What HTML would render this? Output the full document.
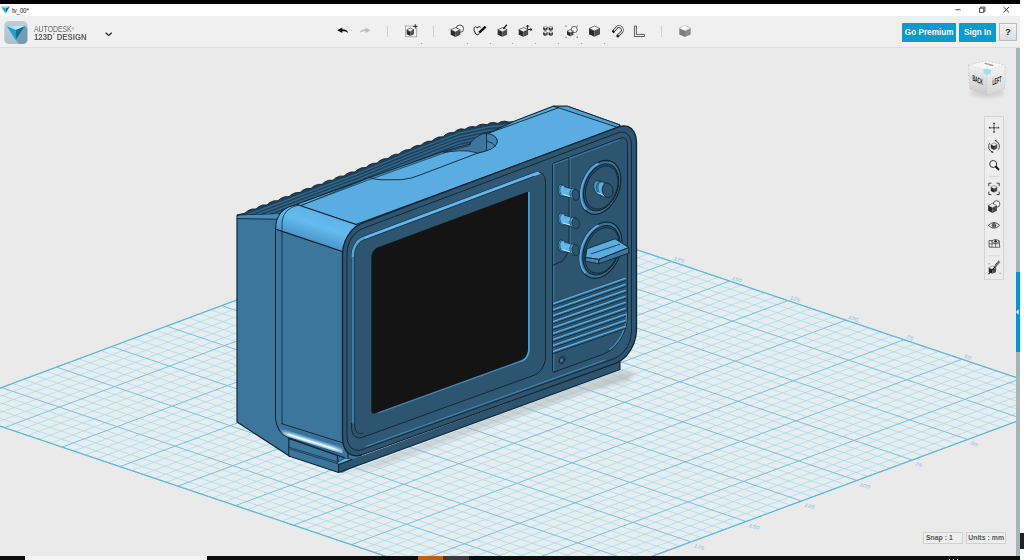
<!DOCTYPE html>
<html><head><meta charset="utf-8"><title>tv_00*</title>
<style>
html,body{margin:0;padding:0;}
body{width:1024px;height:560px;overflow:hidden;background:#fff;font-family:"Liberation Sans",sans-serif;}
#app{position:relative;width:1024px;height:560px;overflow:hidden;background:#eaeaea;}
#scene{position:absolute;left:0;top:0;}
.abs{position:absolute;}
#blacktop{left:0;top:0;width:1020px;height:4px;background:#000;}
#titlebar{left:0;top:4px;width:1024px;height:12px;background:#fff;}
#titletext{left:12px;top:6.7px;font-size:6.3px;line-height:8px;color:#222;letter-spacing:-0.2px;}
#toolbar{left:0;top:16px;width:1020px;height:31.4px;background:#f0f0f0;border-bottom:1px solid #dedede;}
#rightstrip{left:1020px;top:0;width:4px;height:560px;background:#fff;}
#rightblock{left:1020px;top:532.5px;width:4px;height:16.5px;background:#222;}
#vbar{left:1016px;top:48px;width:4px;height:507.5px;background:#a9b4b4;}
#vbarblue{left:1015.5px;top:272px;width:4.5px;height:80px;background:#0a94cf;}
#bottombar{left:0;top:555.5px;width:1020px;height:4.5px;background:#0d0d0d;}
#bb-white{left:25px;top:555.5px;width:182px;height:4.5px;background:#f4f4f4;}
#bb-orange{left:418px;top:555.5px;width:25px;height:4.5px;background:#b5601c;}
#bb-gray{left:443px;top:555.5px;width:26px;height:4.5px;background:#3a3a3a;}
.brand{left:34px;color:#555;white-space:nowrap;}
#brand1{top:25.6px;font-size:8.2px;line-height:8px;color:#6a6a6a;transform-origin:0 0;transform:scaleX(0.84);}
#brand2{top:32.8px;font-size:8.3px;line-height:8px;font-weight:bold;color:#5c5c5c;transform-origin:0 0;transform:scaleX(0.94);}
.btn{top:23px;height:19px;background:#0b9ad0;color:#fff;font-weight:bold;font-size:8.2px;line-height:19px;text-align:center;border-radius:1px;white-space:nowrap;}
#help{left:999.2px;top:23px;width:17.6px;height:18.2px;font-weight:bold;background:linear-gradient(#f6f6f6,#dcdcdc);border:0.5px solid #bbb;box-sizing:border-box;color:#222;font-size:9px;line-height:17px;text-align:center;}
.sep{top:26px;width:1px;height:11px;background:#cfcfcf;}
.dot{top:43px;width:1.2px;height:1.2px;background:#a8a8a8;}
.ico{overflow:visible;}
.status{top:532px;height:11.5px;box-sizing:border-box;border:1px solid #d0d0d0;background:#eeeeee;color:#555;font-weight:bold;font-size:6.85px;line-height:9.6px;white-space:nowrap;padding-left:1.6px;letter-spacing:0.05px;}
#navpanel{left:984px;top:116px;width:19.5px;height:163.5px;box-sizing:border-box;border:1px solid #d4d4d4;background:#ededed;}
.gl{font-size:5px;fill:#7cc3e0;font-family:"Liberation Sans",sans-serif;font-style:italic;}

</style></head><body>
<div id="app">
<svg id="scene" width="1024" height="560" viewBox="0 0 1024 560">
<g id="grid">
<polygon points="1078.5,398.4 497.7,202.9 -53.5,408.1 525.2,603.3" fill="#e7eef1"/>
<path d="M1066.8,394.5 L513.6,599.4 M1067.4,402.5 L486.6,207.0 M1055.2,390.5 L502.0,595.5 M1056.3,406.6 L475.6,211.1 M1043.6,386.6 L490.4,591.6 M1045.2,410.7 L464.5,215.2 M1032.0,382.7 L478.8,587.7 M1034.1,414.8 L453.5,219.3 M1008.7,374.9 L455.7,579.8 M1011.9,423.0 L431.4,227.6 M997.1,371.0 L444.1,575.9 M1000.8,427.1 L420.3,231.7 M985.5,367.1 L432.5,572.0 M989.8,431.2 L409.3,235.8 M973.8,363.2 L420.9,568.1 M978.7,435.3 L398.3,239.9 M950.6,355.3 L397.7,560.3 M956.5,443.6 L376.2,248.1 M939.0,351.4 L386.2,556.4 M945.4,447.7 L365.1,252.2 M927.3,347.5 L374.6,552.5 M934.3,451.8 L354.1,256.3 M915.7,343.6 L363.0,548.6 M923.3,455.9 L343.1,260.4 M892.5,335.8 L339.8,540.8 M901.1,464.1 L321.0,268.6 M880.8,331.9 L328.3,536.9 M890.0,468.2 L310.0,272.8 M869.2,327.9 L316.7,533.0 M879.0,472.3 L298.9,276.9 M857.6,324.0 L305.1,529.1 M867.9,476.4 L287.9,281.0 M834.4,316.2 L282.0,521.2 M845.7,484.6 L265.8,289.2 M822.8,312.3 L270.4,517.3 M834.7,488.7 L254.8,293.3 M811.1,308.4 L258.8,513.4 M823.6,492.8 L243.8,297.4 M799.5,304.5 L247.2,509.5 M812.5,496.9 L232.8,301.5 M776.3,296.7 L224.1,501.7 M790.4,505.1 L210.7,309.7 M764.7,292.7 L212.5,497.8 M779.3,509.2 L199.7,313.8 M753.1,288.8 L201.0,493.9 M768.3,513.3 L188.7,317.9 M741.4,284.9 L189.4,490.0 M757.2,517.4 L177.7,322.0 M718.2,277.1 L166.2,482.2 M735.1,525.6 L155.6,330.2 M706.6,273.2 L154.7,478.3 M724.0,529.7 L144.6,334.3 M695.0,269.3 L143.1,474.4 M713.0,533.7 L133.6,338.4 M683.4,265.4 L131.5,470.5 M701.9,537.8 L122.6,342.5 M660.2,257.6 L108.4,462.7 M679.8,546.0 L100.6,350.7 M648.6,253.7 L96.8,458.8 M668.7,550.1 L89.6,354.8 M636.9,249.8 L85.3,454.9 M657.7,554.2 L78.5,358.9 M625.3,245.8 L73.7,451.0 M646.6,558.3 L67.5,363.0 M602.1,238.0 L50.6,443.2 M624.5,566.5 L45.5,371.2 M590.5,234.1 L39.0,439.3 M613.5,570.6 L34.5,375.3 M578.9,230.2 L27.5,435.4 M602.5,574.7 L23.5,379.4 M567.3,226.3 L15.9,431.5 M591.4,578.8 L12.5,383.5 M544.1,218.5 L-7.2,423.7 M569.3,586.9 L-9.5,391.7 M532.5,214.6 L-18.8,419.8 M558.3,591.0 L-20.5,395.8 M520.9,210.7 L-30.4,415.9 M547.2,595.1 L-31.5,399.9 M509.3,206.8 L-41.9,412.0 M536.2,599.2 L-42.5,404.0" stroke="#a3d8ea" stroke-width="0.7" fill="none"/>
<path d="M1078.5,398.4 L525.2,603.3 M1078.5,398.4 L497.7,202.9 M1020.3,378.8 L467.2,583.8 M1023.0,418.9 L442.4,223.4 M962.2,359.2 L409.3,564.2 M967.6,439.4 L387.2,244.0 M904.1,339.7 L351.4,544.7 M912.2,460.0 L332.0,264.5 M846.0,320.1 L293.5,525.1 M856.8,480.5 L276.9,285.1 M787.9,300.6 L235.7,505.6 M801.5,501.0 L221.7,305.6 M729.8,281.0 L177.8,486.1 M746.1,521.5 L166.6,326.1 M671.8,261.5 L120.0,466.6 M690.9,541.9 L111.6,346.6 M613.7,241.9 L62.1,447.1 M635.6,562.4 L56.5,367.1 M555.7,222.4 L4.3,427.6 M580.4,582.9 L1.5,387.6 M497.7,202.9 L-53.5,408.1 M525.2,603.3 L-53.5,408.1" stroke="#76c3e2" stroke-width="1" fill="none"/>
<polygon points="1078.5,398.4 497.7,202.9 -53.5,408.1 525.2,603.3" fill="none" stroke="#62b9e0" stroke-width="1.2"/>
<text class="gl" transform="translate(1021.8,377.2) rotate(18) scale(1.25,1)">25</text>
<text class="gl" transform="translate(1025.5,424.1) rotate(18) scale(1.25,1)">25</text>
<text class="gl" transform="translate(963.7,357.6) rotate(18) scale(1.25,1)">50</text>
<text class="gl" transform="translate(970.1,444.6) rotate(18) scale(1.25,1)">50</text>
<text class="gl" transform="translate(905.6,338.1) rotate(18) scale(1.25,1)">75</text>
<text class="gl" transform="translate(914.7,465.2) rotate(18) scale(1.25,1)">75</text>
<text class="gl" transform="translate(847.5,318.5) rotate(18) scale(1.25,1)">100</text>
<text class="gl" transform="translate(859.3,485.7) rotate(18) scale(1.25,1)">100</text>
<text class="gl" transform="translate(789.4,299.0) rotate(18) scale(1.25,1)">125</text>
<text class="gl" transform="translate(804.0,506.2) rotate(18) scale(1.25,1)">125</text>
<text class="gl" transform="translate(731.3,279.4) rotate(18) scale(1.25,1)">150</text>
<text class="gl" transform="translate(748.6,526.7) rotate(18) scale(1.25,1)">150</text>
<text class="gl" transform="translate(673.3,259.9) rotate(18) scale(1.25,1)">175</text>
<text class="gl" transform="translate(693.4,547.1) rotate(18) scale(1.25,1)">175</text>
<text class="gl" transform="translate(615.2,240.3) rotate(18) scale(1.25,1)">200</text>
<text class="gl" transform="translate(638.1,567.6) rotate(18) scale(1.25,1)">200</text>
<text class="gl" transform="translate(557.2,220.8) rotate(18) scale(1.25,1)">225</text>
<text class="gl" transform="translate(582.9,588.1) rotate(18) scale(1.25,1)">225</text>
</g>
<g id="tv">
<defs><filter id="blur" x="-20%" y="-50%" width="140%" height="200%"><feGaussianBlur stdDeviation="2.2"/></filter></defs>
<polygon points="345.0,474.0 620.0,371.0 635.0,372.0 629.0,381.0 582.0,393.0 480.0,429.0 380.0,466.0" fill="#aeb3b6" filter="url(#blur)" opacity="0.62"/>
<polygon points="275.5,415.0 284.0,450.0 342.0,473.0 362.0,463.0 362.0,440.0 342.5,440.0" fill="#3c769c"/>
<polygon points="237.0,215.5 290.0,213.0 290.0,456.5 237.0,422.0" fill="#3c769c" stroke="#0f2431" stroke-width="1.17" stroke-linejoin="round"/>
<polygon points="237.5,216.0 245.0,213.4 282.0,211.0 280.0,219.0 238.0,218.6" fill="#4a8cb8"/>
<polyline points="237.5,218.6 277.0,219.2" fill="none" stroke="#0f2431" stroke-width="0.91" stroke-linejoin="round" stroke-linecap="round"/>
<clipPath id="ribclip"><polygon points="237.0,215.0 245.0,213.1 247.8,210.8 251.6,209.1 256.0,209.0 258.8,206.7 262.6,205.0 267.0,204.9 269.8,202.5 273.6,200.9 278.0,200.7 280.8,198.4 284.6,196.8 289.0,196.6 291.8,194.3 295.6,192.7 300.0,192.5 302.8,190.2 306.6,188.5 311.0,188.4 313.8,186.1 317.6,184.4 322.0,184.3 324.8,181.9 328.6,180.3 333.0,180.2 335.8,177.8 339.6,176.2 344.0,176.0 346.8,173.7 350.6,172.1 355.0,171.9 357.8,169.6 361.6,167.8 366.0,167.5 368.8,165.1 372.6,163.4 377.0,163.1 379.8,160.6 383.6,158.9 388.0,158.6 390.8,156.2 394.6,154.4 399.0,154.1 401.8,151.7 405.6,149.9 410.0,149.6 412.8,147.2 416.6,145.5 421.0,145.3 423.8,142.9 427.6,141.3 432.0,141.1 434.8,138.7 438.6,137.0 443.0,136.8 445.8,134.4 449.6,132.7 454.0,132.5 456.8,130.2 460.6,128.8 465.0,129.3 467.8,127.5 471.6,126.4 476.0,127.0 478.8,125.1 482.6,124.1 487.0,124.7 489.8,123.0 493.6,122.4 498.0,123.4 500.8,121.8 504.6,121.1 509.0,122.1 513.6,121.6 513.6,121.6 490.0,132.4 483.0,133.6 475.0,137.5 469.0,144.5 443.8,151.5 367.5,178.5 300.0,206.0 280.0,213.5"/></clipPath>
<polygon points="237.0,215.0 245.0,213.1 247.8,210.8 251.6,209.1 256.0,209.0 258.8,206.7 262.6,205.0 267.0,204.9 269.8,202.5 273.6,200.9 278.0,200.7 280.8,198.4 284.6,196.8 289.0,196.6 291.8,194.3 295.6,192.7 300.0,192.5 302.8,190.2 306.6,188.5 311.0,188.4 313.8,186.1 317.6,184.4 322.0,184.3 324.8,181.9 328.6,180.3 333.0,180.2 335.8,177.8 339.6,176.2 344.0,176.0 346.8,173.7 350.6,172.1 355.0,171.9 357.8,169.6 361.6,167.8 366.0,167.5 368.8,165.1 372.6,163.4 377.0,163.1 379.8,160.6 383.6,158.9 388.0,158.6 390.8,156.2 394.6,154.4 399.0,154.1 401.8,151.7 405.6,149.9 410.0,149.6 412.8,147.2 416.6,145.5 421.0,145.3 423.8,142.9 427.6,141.3 432.0,141.1 434.8,138.7 438.6,137.0 443.0,136.8 445.8,134.4 449.6,132.7 454.0,132.5 456.8,130.2 460.6,128.8 465.0,129.3 467.8,127.5 471.6,126.4 476.0,127.0 478.8,125.1 482.6,124.1 487.0,124.7 489.8,123.0 493.6,122.4 498.0,123.4 500.8,121.8 504.6,121.1 509.0,122.1 513.6,121.6 513.6,121.6 490.0,132.4 483.0,133.6 475.0,137.5 469.0,144.5 443.8,151.5 367.5,178.5 300.0,206.0 280.0,213.5" fill="#1f4058" stroke="#0f2431" stroke-width="0.91" stroke-linejoin="round"/>
<g clip-path="url(#ribclip)">
<polyline points="245.0,215.7 358.0,173.4 412.0,151.4 459.0,133.2 487.5,127.2 513.6,124.2" fill="none" stroke="#31668a" stroke-width="1.56" stroke-linejoin="round" stroke-linecap="round"/>
<polyline points="245.0,218.9 358.0,176.6 412.0,154.6 459.0,136.4 487.5,130.4 513.6,127.4" fill="none" stroke="#31668a" stroke-width="1.56" stroke-linejoin="round" stroke-linecap="round"/>
<polyline points="245.0,222.1 358.0,179.8 412.0,157.8 459.0,139.6 487.5,133.6 513.6,130.6" fill="none" stroke="#31668a" stroke-width="1.56" stroke-linejoin="round" stroke-linecap="round"/>
<polyline points="245.0,225.3 358.0,183.0 412.0,161.0 459.0,142.8 487.5,136.8 513.6,133.8" fill="none" stroke="#31668a" stroke-width="1.56" stroke-linejoin="round" stroke-linecap="round"/>
<polyline points="245.0,228.5 358.0,186.2 412.0,164.2 459.0,146.0 487.5,140.0 513.6,137.0" fill="none" stroke="#31668a" stroke-width="1.56" stroke-linejoin="round" stroke-linecap="round"/>
<polyline points="245.0,231.7 358.0,189.4 412.0,167.4 459.0,149.2 487.5,143.2 513.6,140.2" fill="none" stroke="#31668a" stroke-width="1.56" stroke-linejoin="round" stroke-linecap="round"/>
</g>
<path d="M296,204.5 L367.5,178.5 L443.75,151.5 L469,144.5 L490,132.4 L513.6,121.6 L553,106.2 L567.5,106.2 L620,125 L619,127.3 L356,224.5 Z" fill="#5aade0" stroke="#0f2431" stroke-width="1.04" stroke-linejoin="round" stroke-linecap="round"/>
<polygon points="553.0,106.2 567.5,106.2 620.0,125.0 619.0,127.9 559.0,107.9" fill="#52a2d5" stroke="#0f2431" stroke-width="0.91" stroke-linejoin="round"/>
<polyline points="558.6,107.7 490.0,132.6" fill="none" stroke="#0f2431" stroke-width="0.91" stroke-linejoin="round" stroke-linecap="round"/>
<polygon points="280.0,213.5 300.0,206.0 367.5,178.5 443.8,151.5 469.0,144.5 469.5,146.0 444.0,153.0 367.5,180.3 298.0,206.5 284.0,213.2" fill="#5096c4"/>
<polyline points="284.0,213.2 298.0,206.5 367.5,180.3 444.0,153.0 469.5,146.0" fill="none" stroke="#0f2431" stroke-width="0.65" stroke-linejoin="round" stroke-linecap="round"/>
<polyline points="280.0,213.5 300.0,206.0 367.5,178.5 443.8,151.5 469.0,144.5" fill="none" stroke="#0f2431" stroke-width="0.65" stroke-linejoin="round" stroke-linecap="round"/>
<path d="M370.3,177.6 Q374,179.5 381,179.8 L401.6,179.7 Q412,178.6 420,175 L478,153 Q495,149.5 497.3,141.8 Q497,134.5 486,133.5" fill="none" stroke="#0f2431" stroke-width="0.91" stroke-linejoin="round" stroke-linecap="round"/>
<path d="M443.75,152.3 L469.5,145.5 Q472,138.5 483,133.6 L487,133.6 L487,150.6 L478,153 Q468,150.2 459.4,150.8 Q450,151.5 443.75,152.3 Z" fill="#3c769c" stroke="#0f2431" stroke-width="0.78" stroke-linejoin="round" stroke-linecap="round"/>
<path d="M487,133.6 Q497,134.5 497.3,141.8 Q496,148 487,150.6 Z" fill="#4584ad" stroke="#0f2431" stroke-width="0.78" stroke-linejoin="round" stroke-linecap="round"/>
<path d="M487,141 Q493,142.5 496,146.5" fill="none" stroke="#0f2431" stroke-width="0.78" stroke-linejoin="round" stroke-linecap="round"/>
<path d="M275.5,229 L342.5,251.4 L348,251.4 L348,460 L342.5,457 L288.4,437.8 Q277,433 275.5,418.4 Z" fill="#3c769c" stroke="#0f2431" stroke-width="1.04" stroke-linejoin="round" stroke-linecap="round"/>
<polyline points="282.0,231.2 282.0,418.0 282.2,423.9" fill="none" stroke="#0f2431" stroke-width="0.78" stroke-linejoin="round" stroke-linecap="round"/>
<defs><linearGradient id="fil" gradientUnits="userSpaceOnUse" x1="322" y1="212" x2="312" y2="242"><stop offset="0" stop-color="#5db1e5"/><stop offset="0.45" stop-color="#64bbef"/><stop offset="1" stop-color="#4a94c6"/></linearGradient></defs>
<path d="M275.5,229 Q276,208 297,204.5 L356,224.5 L366,228 L352,256 L342.5,251.4 Z" fill="url(#fil)" stroke="#0f2431" stroke-width="1.04" stroke-linejoin="round" stroke-linecap="round"/>
<path d="M282,231.2 L282,222 Q283,208.5 298.5,205" fill="none" stroke="#0f2431" stroke-width="0.78" stroke-linejoin="round" stroke-linecap="round"/>
<defs><linearGradient id="fil2" gradientUnits="userSpaceOnUse" x1="312" y1="433.2" x2="308" y2="446"><stop offset="0" stop-color="#3c769c"/><stop offset="0.3" stop-color="#39709a"/><stop offset="0.5" stop-color="#8fc4e4"/><stop offset="0.62" stop-color="#ffffff"/><stop offset="0.74" stop-color="#9ccbe8"/><stop offset="0.82" stop-color="#2c5c7c"/><stop offset="1" stop-color="#3c769c"/></linearGradient><linearGradient id="fil2m" gradientUnits="userSpaceOnUse" x1="278" y1="0" x2="343" y2="0"><stop offset="0" stop-color="#fff" stop-opacity="0"/><stop offset="0.18" stop-color="#fff" stop-opacity="1"/><stop offset="0.85" stop-color="#fff" stop-opacity="1"/><stop offset="1" stop-color="#fff" stop-opacity="0.5"/></linearGradient><mask id="fm"><rect x="270" y="410" width="80" height="60" fill="url(#fil2m)"/></mask></defs>
<path d="M281.7,423.7 L342.5,442.7 L342.5,457 L288.4,437.8 Q280,434 277.5,425 Z" fill="url(#fil2)" mask="url(#fm)"/>
<polyline points="281.7,423.7 342.5,442.7" fill="none" stroke="#0f2431" stroke-width="0.91" stroke-linejoin="round" stroke-linecap="round"/>
<polyline points="288.4,437.8 342.5,457.0" fill="none" stroke="#0f2431" stroke-width="0.78" stroke-linejoin="round" stroke-linecap="round"/>
<polygon points="288.8,438.5 337.3,455.5 338.6,464.6 338.6,472.6 288.8,455.9" fill="#3c769c" stroke="#0f2431" stroke-width="1.04" stroke-linejoin="round"/>
<polyline points="288.8,447.2 337.3,461.9" fill="none" stroke="#0f2431" stroke-width="0.65" stroke-linejoin="round" stroke-linecap="round"/>
<polyline points="290.0,449.0 337.3,463.6" fill="none" stroke="#0f2431" stroke-width="0.65" stroke-linejoin="round" stroke-linecap="round"/>
<polyline points="337.3,455.5 337.3,463.8" fill="none" stroke="#0f2431" stroke-width="0.65" stroke-linejoin="round" stroke-linecap="round"/>
<polygon points="338.6,464.6 352.0,459.3 345.3,458.2 337.5,462.4" fill="#62b8ec" stroke="#0f2431" stroke-width="0.52" stroke-linejoin="round"/>
<polygon points="338.6,464.6 352.0,459.5 620.0,361.5 620.0,369.6 338.6,472.6" fill="#2d5570"/>
<polyline points="620.0,361.5 620.0,369.6 338.6,472.6 338.6,464.6 352.0,459.5" fill="none" stroke="#0f2431" stroke-width="1.04" stroke-linejoin="round" stroke-linecap="round"/>
<polygon points="342.5,254.2 343.1,247.8 345.0,241.4 348.1,235.3 352.0,230.1 356.6,226.0 361.5,223.3 619.2,126.7 623.7,125.8 627.8,126.4 631.4,128.6 634.2,132.1 635.9,136.8 636.5,142.3 636.5,329.5 635.8,336.5 633.8,343.6 630.5,350.2 626.3,355.9 621.3,360.3 616.0,363.1 361.5,455.0 356.6,455.9 352.0,455.2 348.1,452.9 345.0,449.0 343.1,444.0 342.5,438.1" fill="#2d5570" stroke="#0f2431" stroke-width="1.30" stroke-linejoin="round"/>
<polygon points="347.0,253.2 347.5,248.1 349.0,243.0 351.4,238.2 354.5,234.1 358.1,230.9 362.0,228.8 618.1,132.8 621.5,132.1 624.8,132.6 627.5,134.3 629.7,137.0 631.0,140.7 631.5,144.9 631.5,331.1 630.9,336.8 629.3,342.5 626.6,347.8 623.2,352.4 619.2,356.0 614.9,358.3 362.0,449.6 358.1,450.4 354.5,449.8 351.4,448.0 349.0,444.9 347.5,440.9 347.0,436.3" fill="#2f5874" stroke="#0f2431" stroke-width="0.91" stroke-linejoin="round"/>
<polyline points="366.2,446.3 604.9,360.0" fill="none" stroke="#4b90bd" stroke-width="0.91" stroke-linejoin="round" stroke-linecap="round"/>
<polygon points="351.5,254.9 351.9,251.1 353.0,247.4 354.7,243.9 357.0,240.8 359.7,238.4 362.6,236.9 534.5,172.6 537.3,172.0 540.0,172.4 542.3,173.7 544.0,176.0 545.2,178.9 545.5,182.4 545.5,357.1 545.2,360.9 544.0,364.6 542.3,368.2 540.0,371.2 537.3,373.6 534.5,375.1 362.6,437.3 359.7,437.9 357.0,437.5 354.7,436.1 353.0,433.9 351.9,431.0 351.5,427.5" fill="#2d5570" stroke="#0f2431" stroke-width="0.91" stroke-linejoin="round"/>
<polygon points="362.6,236.9 537.6,171.4 540.8,173.8 364.9,239.5" fill="#62b8ec"/>
<polygon points="351.5,257.8 351.5,254.9 351.9,251.1 353.0,247.4 354.7,243.9 357.0,240.8 359.7,238.4 362.6,236.9 364.9,239.5 363.3,240.2 361.0,241.4 358.9,243.3 357.1,245.7 355.8,248.4 354.9,251.4 354.6,254.3 355.1,256.5" fill="#56a6da"/>
<polygon points="351.5,257.7 355.1,256.4 355.1,424.6 351.5,423.0" fill="#3f7ba4"/>
<polyline points="363.3,433.1 361.0,433.6 358.9,433.2 357.1,432.2 355.8,430.4 354.9,428.1 354.6,425.4 354.6,254.3 354.9,251.4 355.8,248.4 357.1,245.7 358.9,243.3 361.0,241.4 363.3,240.2 533.7,176.4" fill="none" stroke="#0f2431" stroke-width="0.78" stroke-linejoin="round" stroke-linecap="round"/>
<polygon points="371.3,257.9 371.5,255.8 372.1,253.6 373.1,251.6 374.4,249.8 375.9,248.5 377.6,247.6 527.0,191.9 527.3,191.8 527.6,191.8 527.8,192.0 528.0,192.2 528.1,192.5 528.1,192.9 528.1,350.6 528.0,352.5 527.4,354.4 526.5,356.1 525.4,357.7 524.1,358.9 522.6,359.6 374.4,413.4 373.6,413.6 372.8,413.5 372.2,413.1 371.7,412.5 371.4,411.6 371.3,410.6" fill="#141414"/>
<polyline points="528.9,192.5 528.9,348.5 528.9,349.3 528.7,351.7 528.0,354.2 526.9,356.4 525.4,358.4 523.7,359.9 521.8,360.9" fill="none" stroke="#4f9fd2" stroke-width="1.69" stroke-linejoin="round" stroke-linecap="round"/>
<polyline points="378.8,412.8 522.6,360.6" fill="none" stroke="#4689b6" stroke-width="1.17" stroke-linejoin="round" stroke-linecap="round"/>
<polygon points="552.5,165.5 552.5,165.0 552.7,164.4 552.9,163.9 553.3,163.5 553.7,163.1 554.1,162.9 620.4,138.1 622.3,137.7 624.0,138.0 625.4,138.9 626.6,140.3 627.3,142.2 627.5,144.5 627.5,315.3 626.7,323.4 624.4,331.5 620.6,339.1 615.7,345.7 610.0,350.8 603.8,354.0 554.1,372.0 553.7,372.1 553.3,372.0 552.9,371.8 552.7,371.5 552.5,371.1 552.5,370.6" fill="#2d5570" stroke="#0f2431" stroke-width="0.91" stroke-linejoin="round"/>
<polyline points="626.3,313.2 626.3,315.7 626.3,318.2 626.0,320.8 625.6,323.4 625.0,326.0 624.2,328.6 623.3,331.1 622.3,333.6 621.1,336.0 619.8,338.4 618.3,340.6 616.7,342.7 615.1,344.6 613.3,346.4 611.5,348.0 609.7,349.4" fill="none" stroke="#4b90bd" stroke-width="1.30" stroke-linejoin="round" stroke-linecap="round"/>
<polyline points="553.8,164.7 553.8,370.5" fill="none" stroke="#3f7ba4" stroke-width="1.04" stroke-linejoin="round" stroke-linecap="round"/>
<polyline points="554.2,164.3 619.0,140.0" fill="none" stroke="#3f7ba4" stroke-width="1.04" stroke-linejoin="round" stroke-linecap="round"/>
<polyline points="569.0,157.5 569.0,245.7 566.9,254.5 562.1,261.3 552.6,265.4" fill="none" stroke="#0f2431" stroke-width="0.91" stroke-linejoin="round" stroke-linecap="round"/>
<polyline points="570.2,157.1 570.2,245.3" fill="none" stroke="#3f7ba4" stroke-width="0.78" stroke-linejoin="round" stroke-linecap="round"/>
<polygon points="553.0,302.5 625.7,277.1 625.7,279.1 553.0,304.5" fill="#5aade0"/>
<polygon points="553.0,304.5 625.7,279.1 625.7,280.4 553.0,305.8" fill="#3a7297"/>
<polyline points="553.0,305.8 625.7,280.4" fill="none" stroke="#0f2431" stroke-width="0.91" stroke-linejoin="round" stroke-linecap="round"/>
<polyline points="553.0,302.5 625.7,277.1" fill="none" stroke="#0f2431" stroke-width="0.45" stroke-linejoin="round" stroke-linecap="round"/>
<polygon points="553.0,308.5 625.7,283.1 625.7,285.1 553.0,310.5" fill="#5aade0"/>
<polygon points="553.0,310.5 625.7,285.1 625.7,286.4 553.0,311.8" fill="#3a7297"/>
<polyline points="553.0,311.8 625.7,286.4" fill="none" stroke="#0f2431" stroke-width="0.91" stroke-linejoin="round" stroke-linecap="round"/>
<polyline points="553.0,308.5 625.7,283.1" fill="none" stroke="#0f2431" stroke-width="0.45" stroke-linejoin="round" stroke-linecap="round"/>
<polygon points="553.0,314.4 625.7,289.1 625.7,291.1 553.0,316.4" fill="#5aade0"/>
<polygon points="553.0,316.4 625.7,291.1 625.7,292.4 553.0,317.7" fill="#3a7297"/>
<polyline points="553.0,317.7 625.7,292.4" fill="none" stroke="#0f2431" stroke-width="0.91" stroke-linejoin="round" stroke-linecap="round"/>
<polyline points="553.0,314.4 625.7,289.1" fill="none" stroke="#0f2431" stroke-width="0.45" stroke-linejoin="round" stroke-linecap="round"/>
<polygon points="553.0,320.4 625.7,295.1 625.7,297.1 553.0,322.4" fill="#5aade0"/>
<polygon points="553.0,322.4 625.7,297.1 625.7,298.4 553.0,323.7" fill="#3a7297"/>
<polyline points="553.0,323.7 625.7,298.4" fill="none" stroke="#0f2431" stroke-width="0.91" stroke-linejoin="round" stroke-linecap="round"/>
<polyline points="553.0,320.4 625.7,295.1" fill="none" stroke="#0f2431" stroke-width="0.45" stroke-linejoin="round" stroke-linecap="round"/>
<polygon points="553.0,326.4 625.7,301.1 625.7,303.1 553.0,328.4" fill="#5aade0"/>
<polygon points="553.0,328.4 625.7,303.1 625.7,304.4 553.0,329.7" fill="#3a7297"/>
<polyline points="553.0,329.7 625.7,304.4" fill="none" stroke="#0f2431" stroke-width="0.91" stroke-linejoin="round" stroke-linecap="round"/>
<polyline points="553.0,326.4 625.7,301.1" fill="none" stroke="#0f2431" stroke-width="0.45" stroke-linejoin="round" stroke-linecap="round"/>
<polygon points="553.0,332.3 625.7,307.1 625.7,309.1 553.0,334.3" fill="#5aade0"/>
<polygon points="553.0,334.3 625.7,309.1 625.7,310.4 553.0,335.6" fill="#3a7297"/>
<polyline points="553.0,335.6 625.7,310.4" fill="none" stroke="#0f2431" stroke-width="0.91" stroke-linejoin="round" stroke-linecap="round"/>
<polyline points="553.0,332.3 625.7,307.1" fill="none" stroke="#0f2431" stroke-width="0.45" stroke-linejoin="round" stroke-linecap="round"/>
<polygon points="553.0,338.3 625.7,313.1 625.7,315.1 553.0,340.3" fill="#5aade0"/>
<polygon points="553.0,340.3 625.7,315.1 625.7,316.4 553.0,341.6" fill="#3a7297"/>
<polyline points="553.0,341.6 625.7,316.4" fill="none" stroke="#0f2431" stroke-width="0.91" stroke-linejoin="round" stroke-linecap="round"/>
<polyline points="553.0,338.3 625.7,313.1" fill="none" stroke="#0f2431" stroke-width="0.45" stroke-linejoin="round" stroke-linecap="round"/>
<polygon points="553.0,344.3 625.7,319.1 625.7,321.1 553.0,346.3" fill="#5aade0"/>
<polygon points="553.0,346.3 625.7,321.1 625.7,322.4 553.0,347.6" fill="#3a7297"/>
<polyline points="553.0,347.6 625.7,322.4" fill="none" stroke="#0f2431" stroke-width="0.91" stroke-linejoin="round" stroke-linecap="round"/>
<polyline points="553.0,344.3 625.7,319.1" fill="none" stroke="#0f2431" stroke-width="0.45" stroke-linejoin="round" stroke-linecap="round"/>
<polygon points="553.0,350.2 625.7,325.1 625.7,327.1 553.0,352.2" fill="#5aade0"/>
<polygon points="553.0,352.2 625.7,327.1 625.7,328.4 553.0,353.6" fill="#3a7297"/>
<polyline points="553.0,353.6 625.7,328.4" fill="none" stroke="#0f2431" stroke-width="0.91" stroke-linejoin="round" stroke-linecap="round"/>
<polyline points="553.0,350.2 625.7,325.1" fill="none" stroke="#0f2431" stroke-width="0.45" stroke-linejoin="round" stroke-linecap="round"/>
<polygon points="564.8,359.0 564.7,360.2 564.3,361.3 563.6,362.4 562.8,363.2 562.0,363.7 561.1,363.8 560.3,363.6 559.7,363.0 559.3,362.1 559.1,361.1 559.3,359.9 559.7,358.8 560.3,357.7 561.1,356.9 562.0,356.4 562.8,356.3 563.6,356.5 564.3,357.1 564.7,358.0 564.8,359.0" fill="#2a4f69" stroke="#0f2431" stroke-width="0.91" stroke-linejoin="round"/>
<polygon points="563.1,359.6 562.9,360.5 562.6,361.2 562.1,361.9 561.5,362.2 560.9,362.3 560.4,362.0 560.0,361.5 559.9,360.8 560.0,360.0 560.4,359.2 560.9,358.6 561.5,358.2 562.1,358.2 562.6,358.4 562.9,358.9 563.1,359.6" fill="#4b90bd" stroke="#0f2431" stroke-width="0.65" stroke-linejoin="round"/>
<polygon points="620.8,179.8 620.6,183.9 619.8,188.1 618.6,192.4 616.9,196.5 614.8,200.3 612.4,203.9 609.7,207.0 606.7,209.6 603.6,211.7 600.4,213.2 597.2,214.1 594.1,214.3 591.2,213.9 588.5,212.7 586.0,211.0 583.9,208.7 582.3,205.8 581.1,202.5 580.3,198.9 580.1,194.9 580.3,190.8 581.1,186.5 582.3,182.3 583.9,178.3 586.0,174.4 588.5,170.8 591.2,167.7 594.1,165.0 597.2,162.9 600.4,161.4 603.6,160.6 606.7,160.3 609.7,160.8 612.4,161.9 614.8,163.6 616.9,166.0 618.6,168.8 619.8,172.1 620.6,175.8 620.8,179.8" fill="#3a7196" stroke="#0f2431" stroke-width="1.17" stroke-linejoin="round"/>
<polyline points="585.5,208.8 584.6,207.8 583.9,206.6 583.2,205.3 582.6,204.0 582.1,202.5 581.6,201.0 581.3,199.4 581.1,197.8 581.0,196.0 580.9,194.3 581.0,192.5 581.2,190.7 581.4,188.9 581.8,187.1 582.2,185.2 582.8,183.4 583.4,181.6 584.1,179.8 584.9,178.1 585.8,176.4 586.7,174.8 587.8,173.2 588.8,171.7 590.0,170.3 591.2,169.0 592.4,167.7 593.7,166.6 595.0,165.5 596.4,164.6 597.7,163.8" fill="none" stroke="#5aade0" stroke-width="1.95" stroke-linejoin="round" stroke-linecap="round"/>
<polygon points="618.8,180.8 618.6,184.4 618.0,188.1 616.9,191.7 615.5,195.3 613.7,198.6 611.5,201.7 609.2,204.4 606.6,206.7 603.9,208.6 601.1,209.9 598.4,210.6 595.7,210.8 593.1,210.4 590.7,209.4 588.6,207.9 586.8,205.9 585.4,203.4 584.3,200.6 583.7,197.4 583.5,194.0 583.7,190.4 584.3,186.7 585.4,183.0 586.8,179.5 588.6,176.1 590.7,173.1 593.1,170.3 595.7,168.0 598.4,166.2 601.1,164.9 603.9,164.1 606.6,163.9 609.2,164.3 611.5,165.3 613.7,166.8 615.5,168.8 616.9,171.3 618.0,174.2 618.6,177.4 618.8,180.8" fill="#2a506a" stroke="#0f2431" stroke-width="1.04" stroke-linejoin="round"/>
<polygon points="618.0,181.5 617.8,184.8 617.2,188.2 616.2,191.6 614.9,194.8 613.2,197.9 611.3,200.8 609.1,203.3 606.7,205.4 604.2,207.1 601.7,208.3 599.2,208.9 596.7,209.1 594.3,208.7 592.1,207.9 590.2,206.5 588.5,204.6 587.2,202.3 586.2,199.7 585.6,196.8 585.4,193.6 585.6,190.3 586.2,186.9 587.2,183.6 588.5,180.3 590.2,177.2 592.1,174.4 594.3,171.9 596.7,169.8 599.2,168.1 601.7,166.9 604.2,166.2 606.7,166.0 609.1,166.4 611.3,167.3 613.2,168.7 614.9,170.5 616.2,172.8 617.2,175.4 617.8,178.4 618.0,181.5" fill="#2d5570" stroke="#0f2431" stroke-width="0.91" stroke-linejoin="round"/>
<polygon points="622.0,242.4 621.7,246.7 621.0,251.1 619.7,255.5 617.9,259.8 615.8,263.9 613.2,267.6 610.4,270.8 607.3,273.6 604.0,275.8 600.7,277.3 597.3,278.2 594.1,278.4 591.0,277.9 588.1,276.8 585.6,274.9 583.4,272.5 581.7,269.5 580.4,266.1 579.6,262.2 579.3,258.1 579.6,253.7 580.4,249.3 581.7,244.9 583.4,240.6 585.6,236.6 588.1,232.9 591.0,229.6 594.1,226.9 597.3,224.7 600.7,223.1 604.0,222.2 607.3,222.0 610.4,222.5 613.2,223.6 615.8,225.5 617.9,227.9 619.7,230.9 621.0,234.4 621.7,238.2 622.0,242.4" fill="#3a7196" stroke="#0f2431" stroke-width="1.17" stroke-linejoin="round"/>
<polyline points="585.0,272.7 584.1,271.6 583.3,270.3 582.6,269.0 581.9,267.6 581.4,266.1 581.0,264.5 580.6,262.8 580.4,261.1 580.2,259.3 580.2,257.4 580.3,255.6 580.5,253.7 580.7,251.8 581.1,249.9 581.6,247.9 582.1,246.0 582.8,244.1 583.6,242.3 584.4,240.5 585.3,238.7 586.3,237.0 587.4,235.4 588.5,233.8 589.7,232.3 591.0,230.9 592.3,229.6 593.6,228.4 595.0,227.3 596.4,226.4 597.8,225.5" fill="none" stroke="#5aade0" stroke-width="1.95" stroke-linejoin="round" stroke-linecap="round"/>
<polygon points="620.0,243.4 619.8,247.2 619.1,251.1 618.0,254.9 616.5,258.6 614.6,262.2 612.3,265.4 609.8,268.3 607.1,270.7 604.3,272.6 601.4,274.0 598.5,274.7 595.6,274.9 592.9,274.5 590.4,273.5 588.2,271.9 586.3,269.7 584.8,267.1 583.7,264.1 583.0,260.7 582.7,257.1 583.0,253.3 583.7,249.5 584.8,245.6 586.3,241.9 588.2,238.4 590.4,235.1 592.9,232.3 595.6,229.8 598.5,227.9 601.4,226.6 604.3,225.8 607.1,225.6 609.8,226.0 612.3,227.0 614.6,228.6 616.5,230.8 618.0,233.4 619.1,236.4 619.8,239.8 620.0,243.4" fill="#2a506a" stroke="#0f2431" stroke-width="1.04" stroke-linejoin="round"/>
<polygon points="619.2,244.1 618.9,247.6 618.3,251.2 617.3,254.8 615.9,258.2 614.1,261.5 612.1,264.5 609.8,267.1 607.3,269.3 604.6,271.1 601.9,272.3 599.2,273.1 596.6,273.2 594.1,272.8 591.8,271.9 589.8,270.4 588.0,268.4 586.6,266.0 585.6,263.2 584.9,260.1 584.7,256.8 584.9,253.3 585.6,249.7 586.6,246.2 588.0,242.7 589.8,239.5 591.8,236.5 594.1,233.8 596.6,231.6 599.2,229.8 601.9,228.6 604.6,227.8 607.3,227.7 609.8,228.1 612.1,229.0 614.1,230.5 615.9,232.4 617.3,234.9 618.3,237.7 618.9,240.8 619.2,244.1" fill="#2d5570" stroke="#0f2431" stroke-width="0.91" stroke-linejoin="round"/>
<defs><linearGradient id="cylg" x1="0" y1="0" x2="0.25" y2="1"><stop offset="0" stop-color="#4f9fd2"/><stop offset="0.45" stop-color="#66bdf0"/><stop offset="1" stop-color="#4a94c6"/></linearGradient></defs>
<ellipse cx="561.8" cy="190.6" rx="3.6" ry="6.1" fill="#4f9fd2" stroke="#0f2431" stroke-width="0.70" transform="rotate(-10 561.8 190.6)"/>
<ellipse cx="563.3" cy="191.0" rx="3.4" ry="5.8" fill="#62b8ec" stroke="#0f2431" stroke-width="0.60" transform="rotate(-10 563.3 191.0)"/>
<polygon points="564.6,186.8 574.4,189.8 572.8,198.6 563.0,195.6" fill="url(#cylg)"/>
<polyline points="564.6,186.8 574.4,189.8" fill="none" stroke="#0f2431" stroke-width="0.65" stroke-linejoin="round" stroke-linecap="round"/>
<polyline points="563.0,195.6 572.8,198.6" fill="none" stroke="#0f2431" stroke-width="0.65" stroke-linejoin="round" stroke-linecap="round"/>
<polyline points="563.3,194.4 572.9,197.4" fill="none" stroke="#d4ecfa" stroke-width="0.91" stroke-linejoin="round" stroke-linecap="round"/>
<ellipse cx="573.6" cy="194.2" rx="3.6" ry="5.5" fill="#5aade0" stroke="#0f2431" stroke-width="0.60" transform="rotate(-10 573.6 194.2)"/>
<ellipse cx="575.6" cy="194.8" rx="3.7" ry="5.6" fill="#2d5570" stroke="#0f2431" stroke-width="0.70" transform="rotate(-10 575.6 194.8)"/>
<ellipse cx="561.8" cy="219.1" rx="3.6" ry="6.1" fill="#4f9fd2" stroke="#0f2431" stroke-width="0.70" transform="rotate(-10 561.8 219.1)"/>
<ellipse cx="563.3" cy="219.5" rx="3.4" ry="5.8" fill="#62b8ec" stroke="#0f2431" stroke-width="0.60" transform="rotate(-10 563.3 219.5)"/>
<polygon points="564.6,215.3 574.4,218.3 572.8,227.1 563.0,224.1" fill="url(#cylg)"/>
<polyline points="564.6,215.3 574.4,218.3" fill="none" stroke="#0f2431" stroke-width="0.65" stroke-linejoin="round" stroke-linecap="round"/>
<polyline points="563.0,224.1 572.8,227.1" fill="none" stroke="#0f2431" stroke-width="0.65" stroke-linejoin="round" stroke-linecap="round"/>
<polyline points="563.3,222.9 572.9,225.9" fill="none" stroke="#d4ecfa" stroke-width="0.91" stroke-linejoin="round" stroke-linecap="round"/>
<ellipse cx="573.6" cy="222.7" rx="3.6" ry="5.5" fill="#5aade0" stroke="#0f2431" stroke-width="0.60" transform="rotate(-10 573.6 222.7)"/>
<ellipse cx="575.6" cy="223.3" rx="3.7" ry="5.6" fill="#2d5570" stroke="#0f2431" stroke-width="0.70" transform="rotate(-10 575.6 223.3)"/>
<ellipse cx="561.8" cy="245.9" rx="3.6" ry="6.1" fill="#4f9fd2" stroke="#0f2431" stroke-width="0.70" transform="rotate(-10 561.8 245.9)"/>
<ellipse cx="563.3" cy="246.3" rx="3.4" ry="5.8" fill="#62b8ec" stroke="#0f2431" stroke-width="0.60" transform="rotate(-10 563.3 246.3)"/>
<polygon points="564.6,242.1 574.4,245.1 572.8,253.9 563.0,250.9" fill="url(#cylg)"/>
<polyline points="564.6,242.1 574.4,245.1" fill="none" stroke="#0f2431" stroke-width="0.65" stroke-linejoin="round" stroke-linecap="round"/>
<polyline points="563.0,250.9 572.8,253.9" fill="none" stroke="#0f2431" stroke-width="0.65" stroke-linejoin="round" stroke-linecap="round"/>
<polyline points="563.3,249.7 572.9,252.7" fill="none" stroke="#d4ecfa" stroke-width="0.91" stroke-linejoin="round" stroke-linecap="round"/>
<ellipse cx="573.6" cy="249.5" rx="3.6" ry="5.5" fill="#5aade0" stroke="#0f2431" stroke-width="0.60" transform="rotate(-10 573.6 249.5)"/>
<ellipse cx="575.6" cy="250.1" rx="3.7" ry="5.6" fill="#2d5570" stroke="#0f2431" stroke-width="0.70" transform="rotate(-10 575.6 250.1)"/>
<ellipse cx="597.8" cy="187.3" rx="4.0" ry="6.6" fill="#4f9fd2" stroke="#0f2431" stroke-width="0.70" transform="rotate(-10 597.8 187.3)"/>
<polygon points="598.8,180.8 606.6,183.2 604.4,197.4 596.8,193.8" fill="url(#cylg)"/>
<polyline points="598.8,180.8 606.6,183.2" fill="none" stroke="#0f2431" stroke-width="0.65" stroke-linejoin="round" stroke-linecap="round"/>
<polyline points="596.8,193.8 604.4,197.4" fill="none" stroke="#0f2431" stroke-width="0.65" stroke-linejoin="round" stroke-linecap="round"/>
<ellipse cx="600.6" cy="188.2" rx="4.0" ry="6.7" fill="none" stroke="#0f2431" stroke-width="0.60" transform="rotate(-10 600.6 188.2)"/>
<ellipse cx="602.2" cy="188.7" rx="4.2" ry="6.9" fill="#5aade0" stroke="#0f2431" stroke-width="0.60" transform="rotate(-10 602.2 188.7)"/>
<polyline points="598.0,192.6 604.0,195.6" fill="none" stroke="#d4ecfa" stroke-width="0.91" stroke-linejoin="round" stroke-linecap="round"/>
<ellipse cx="607.6" cy="190.4" rx="5.3" ry="7.4" fill="#2d5570" stroke="#0f2431" stroke-width="0.80" transform="rotate(-10 607.6 190.4)"/>
<polygon points="586.9,248.8 615.0,238.8 628.8,247.5 598.8,259.4 585.6,257.5" fill="#5aade0" stroke="#0f2431" stroke-width="0.91" stroke-linejoin="round"/>
<polyline points="591.2,253.8 619.4,244.4" fill="none" stroke="#0f2431" stroke-width="0.78" stroke-linejoin="round" stroke-linecap="round"/>
<polygon points="598.8,259.4 628.8,247.5 628.8,253.1 598.8,263.8" fill="#3c769c" stroke="#0f2431" stroke-width="0.91" stroke-linejoin="round"/>
<polygon points="585.6,257.5 598.8,259.4 598.8,263.8 585.6,261.2" fill="#4584ad" stroke="#0f2431" stroke-width="0.91" stroke-linejoin="round"/>
</g>
</svg>
<div id="blacktop" class="abs"></div>
<div id="titlebar" class="abs"></div>
<svg class="abs ico" style="left:1px;top:6px" width="9" height="8" viewBox="0 0 9 8"><polygon points="0,0.6 4.3,2.4 4.8,7.6" fill="#1b9ad2"/><polygon points="8.8,0.2 4.3,2.4 4.8,7.6" fill="#0d6e9c"/><polygon points="0,0.6 8.8,0.2 4.3,2.6" fill="#7fd0ee"/></svg>
<div id="titletext" class="abs">tv_00*</div>
<svg class="abs ico" style="left:955px;top:5px" width="56" height="10" viewBox="0 0 56 10"><path d="M0.5,4.7h5" stroke="#333" stroke-width="0.9" fill="none"/><path d="M24.5,3.2h4.2v4.2h-4.2z M25.7,3.2v-1.1h4.2v4.2h-1.2" stroke="#222" stroke-width="0.8" fill="none"/><path d="M48.6,2l5.4,5.4M54,2l-5.4,5.4" stroke="#222" stroke-width="0.9" fill="none"/></svg>
<div id="toolbar" class="abs"></div>
<svg class="abs ico" style="left:0;top:0" width="40" height="48" viewBox="0 0 40 48">
<defs><linearGradient id="lg1" x1="0" y1="0" x2="0" y2="1"><stop offset="0" stop-color="#bccdd6"/><stop offset="1" stop-color="#a9c1cd"/></linearGradient>
<linearGradient id="lg2" x1="0" y1="0" x2="1" y2="0"><stop offset="0" stop-color="#8fd6f0"/><stop offset="1" stop-color="#e4f6fc"/></linearGradient>
<clipPath id="lgc"><rect x="4.3" y="20.9" width="23.1" height="23.1" rx="4.6"/></clipPath></defs>
<rect x="4.3" y="20.9" width="23.1" height="23.1" rx="4.6" fill="url(#lg1)"/>
<g clip-path="url(#lgc)"><polygon points="15.7,40 25.1,26 30,31 30,46 21,46" fill="#709cb1"/></g>
<polygon points="6.9,26.3 25.1,26 15.7,29.9" fill="url(#lg2)"/>
<polygon points="6.9,26.3 15.7,29.9 15.7,40" fill="#1b9fd8"/>
<polygon points="25.1,26 15.7,29.9 15.7,40" fill="#0e6e9b"/>
</svg>
<div id="brand1" class="abs brand">AUTODESK<span style="font-size:4px;vertical-align:top;line-height:5px">®</span></div>
<div id="brand2" class="abs brand">123D<span style="font-size:5px;vertical-align:top;line-height:5px">°</span> DESIGN</div>
<svg class="abs ico" style="left:105px;top:32px" width="8" height="5" viewBox="0 0 8 5"><path d="M0.6,0.8 L3.7,3.4 L6.8,0.8" stroke="#222" stroke-width="1.3" fill="none"/></svg>
<svg class="abs ico" style="left:0;top:0" width="1024" height="48" viewBox="0 0 1024 48"><path d="M337.2,30.2 L342.3,27.4 L342.3,29.2 C345.6,29.2 347.8,30.6 348.3,33 C346.8,31.6 345,31.2 342.3,31.3 L342.3,33 Z" fill="#111"/>
<path d="M370.6,30.2 L365.5,27.4 L365.5,29.2 C362.2,29.2 360,30.6 359.5,33 C361,31.6 362.8,31.2 365.5,31.3 L365.5,33 Z" fill="#bcbcbc"/>
<rect x="405.4" y="26" width="11.3" height="10.8" fill="#f7f7f7" stroke="#9a9a9a" stroke-width="0.8"/>
<polygon points="406.70,29.84 410.30,31.68 410.30,36.00 406.70,34.16" fill="#2b2b2b"/><polygon points="410.30,31.68 413.90,29.84 413.90,34.16 410.30,36.00" fill="#4d4d4d"/><polygon points="410.30,28.00 413.90,29.84 410.30,31.68 406.70,29.84" fill="#f2f2f2" stroke="#222" stroke-width="0.6" stroke-linejoin="round"/>
<path d="M415.3,24.2v4.4M413.1,26.4h4.4" stroke="#333" stroke-width="1" fill="none"/>
<circle cx="459.9" cy="28.7" r="3.7" fill="#f6f6f6" stroke="#222" stroke-width="0.8"/>
<polygon points="450.70,29.76 455.50,31.92 455.50,37.00 450.70,34.84" fill="#2b2b2b"/><polygon points="455.50,31.92 460.30,29.76 460.30,34.84 455.50,37.00" fill="#4d4d4d"/><polygon points="455.50,27.60 460.30,29.76 455.50,31.92 450.70,29.76" fill="#f2f2f2" stroke="#222" stroke-width="0.6" stroke-linejoin="round"/>
<path d="M477.3,28.2 C476.5,26.2 474.3,26.2 474,28.4 C473.7,31 475.5,33.6 477,34.8 C478.3,34.6 479.3,33.6 480.3,32.4" fill="none" stroke="#111" stroke-width="0.9"/>
<path d="M477.3,28.2 C478,26.6 479.8,26.2 480.8,27.4" fill="none" stroke="#111" stroke-width="0.9"/>
<path d="M479.2,32.6 L485.6,26.6" stroke="#111" stroke-width="2.4" fill="none"/><circle cx="475.3" cy="33.2" r="0.8" fill="#111"/>
<polygon points="497.70,29.72 502.40,31.83 502.40,36.80 497.70,34.68" fill="#2b2b2b"/><polygon points="502.40,31.83 507.10,29.72 507.10,34.68 502.40,36.80" fill="#4d4d4d"/><polygon points="502.40,27.60 507.10,29.72 502.40,31.83 497.70,29.72" fill="#f2f2f2" stroke="#222" stroke-width="0.6" stroke-linejoin="round"/>
<path d="M503.2,28.9 L506.9,24.8" stroke="#111" stroke-width="1.3"/>
<polygon points="518.70,29.72 523.40,31.83 523.40,36.80 518.70,34.68" fill="#2b2b2b"/><polygon points="523.40,31.83 528.10,29.72 528.10,34.68 523.40,36.80" fill="#4d4d4d"/><polygon points="523.40,27.60 528.10,29.72 523.40,31.83 518.70,29.72" fill="#f2f2f2" stroke="#222" stroke-width="0.6" stroke-linejoin="round"/>
<path d="M527.6,29 L527.6,25.4 M526.3,26.7 L527.6,25 L528.9,26.7 M528,29.5 L531.6,29.5 M530.3,28.2 L532,29.5 L530.3,30.8" stroke="#111" stroke-width="0.9" fill="none"/>
<polygon points="543.20,27.36 545.40,28.42 545.40,30.90 543.20,29.84" fill="#2b2b2b"/><polygon points="545.40,28.42 547.60,27.36 547.60,29.84 545.40,30.90" fill="#4d4d4d"/><polygon points="545.40,26.30 547.60,27.36 545.40,28.42 543.20,27.36" fill="#f2f2f2" stroke="#222" stroke-width="0.4" stroke-linejoin="round"/>
<polygon points="543.20,32.56 545.40,33.62 545.40,36.10 543.20,35.04" fill="#2b2b2b"/><polygon points="545.40,33.62 547.60,32.56 547.60,35.04 545.40,36.10" fill="#4d4d4d"/><polygon points="545.40,31.50 547.60,32.56 545.40,33.62 543.20,32.56" fill="#f2f2f2" stroke="#222" stroke-width="0.4" stroke-linejoin="round"/>
<polygon points="548.60,27.36 550.80,28.42 550.80,30.90 548.60,29.84" fill="#2b2b2b"/><polygon points="550.80,28.42 553.00,27.36 553.00,29.84 550.80,30.90" fill="#4d4d4d"/><polygon points="550.80,26.30 553.00,27.36 550.80,28.42 548.60,27.36" fill="#f2f2f2" stroke="#222" stroke-width="0.4" stroke-linejoin="round"/>
<polygon points="548.60,32.56 550.80,33.62 550.80,36.10 548.60,35.04" fill="#2b2b2b"/><polygon points="550.80,33.62 553.00,32.56 553.00,35.04 550.80,36.10" fill="#4d4d4d"/><polygon points="550.80,31.50 553.00,32.56 550.80,33.62 548.60,32.56" fill="#f2f2f2" stroke="#222" stroke-width="0.4" stroke-linejoin="round"/>
<circle cx="574.2" cy="29.6" r="3.1" fill="#f6f6f6" stroke="#222" stroke-width="0.7"/>
<polygon points="567.00,31.22 570.20,32.74 570.20,36.30 567.00,34.78" fill="#2b2b2b"/><polygon points="570.20,32.74 573.40,31.22 573.40,34.78 570.20,36.30" fill="#4d4d4d"/><polygon points="570.20,29.70 573.40,31.22 570.20,32.74 567.00,31.22" fill="#f2f2f2" stroke="#222" stroke-width="0.6" stroke-linejoin="round"/>
<rect x="565.5" y="25.7" width="1" height="1" fill="#333"/>
<rect x="576.7" y="25.7" width="1" height="1" fill="#333"/>
<rect x="565.5" y="36.7" width="1" height="1" fill="#333"/>
<rect x="576.7" y="36.7" width="1" height="1" fill="#333"/>
<polygon points="589.00,28.54 594.50,30.98 594.50,36.70 589.00,34.26" fill="#2b2b2b"/><polygon points="594.50,30.98 600.00,28.54 600.00,34.26 594.50,36.70" fill="#4d4d4d"/><polygon points="594.50,26.10 600.00,28.54 594.50,30.98 589.00,28.54" fill="#f2f2f2" stroke="#222" stroke-width="0.6" stroke-linejoin="round"/>
<path d="M613.2,31.6 L616.6,27.6 A3.4,3.4 0 0 1 621.6,32.2 L617.6,36" fill="none" stroke="#222" stroke-width="2.6"/>
<path d="M613.2,31.6 L616.6,27.6 A3.4,3.4 0 0 1 621.6,32.2 L617.6,36" fill="none" stroke="#f4f4f4" stroke-width="1.2"/>
<path d="M612.4,30.8 L614.3,32.5 M616.8,35.2 L618.6,36.9" stroke="#111" stroke-width="2.2"/>
<path d="M634.4,26 h2 v8.4 h8 v2.1 h-10 z" fill="#f4f4f4" stroke="#333" stroke-width="0.8"/>
<polygon points="679.30,28.17 685.00,30.84 685.00,37.10 679.30,34.43" fill="#7d7d7d"/><polygon points="685.00,30.84 690.70,28.17 690.70,34.43 685.00,37.10" fill="#8c8c8c"/><polygon points="685.00,25.50 690.70,28.17 685.00,30.84 679.30,28.17" fill="#fbfbfb" stroke="#999" stroke-width="0.5" stroke-linejoin="round"/></svg>
<div class="abs sep" style="left:387.4px"></div><div class="abs sep" style="left:432.8px"></div><div class="abs sep" style="left:661.4px"></div><div class="abs dot" style="left:421.0px"></div><div class="abs dot" style="left:466.8px"></div><div class="abs dot" style="left:489.5px"></div><div class="abs dot" style="left:512.2px"></div><div class="abs dot" style="left:535.0px"></div><div class="abs dot" style="left:558.0px"></div><div class="abs dot" style="left:581.0px"></div><div class="abs dot" style="left:604.0px"></div>
<div class="abs btn" style="left:902.3px;width:53.7px;">Go Premium</div>
<div class="abs btn" style="left:959.3px;width:36.6px;">Sign In</div>
<div id="help" class="abs">?</div>

<div id="vbar" class="abs"></div>
<div id="vbarblue" class="abs"></div>
<svg class="abs ico" style="left:1016px;top:309px" width="3" height="6" viewBox="0 0 3 6"><polygon points="0,3 2.6,0.3 2.6,5.7" fill="#fff"/></svg>
<div id="rightstrip" class="abs"></div>
<div id="rightblock" class="abs"></div>
<div id="bottombar" class="abs"></div>
<div id="bb-white" class="abs"></div>
<div id="bb-orange" class="abs"></div>
<div id="bb-gray" class="abs"></div>
<div class="abs" style="left:949px;top:558.8px;width:1.3px;height:1.2px;background:#ddd"></div><div class="abs" style="left:953px;top:558.8px;width:1.3px;height:1.2px;background:#ddd"></div><div class="abs" style="left:956.5px;top:558.8px;width:1.3px;height:1.2px;background:#ddd"></div>
<div class="abs status" style="left:923.3px;width:40px;">Snap : 1</div>
<div class="abs status" style="left:965.6px;width:40px;">Units : mm</div>
<div id="navpanel" class="abs"></div>
<svg class="abs ico" style="left:0;top:0" width="1024" height="560" viewBox="0 0 1024 560"><path d="M994,123.4v8.8M989.6,127.8h8.8" stroke="#333" stroke-width="0.75" fill="none"/><path d="M994,122.3l-1.2,1.7h2.4zM994,133.3l-1.2,-1.7h2.4zM988.5,127.8l1.7,-1.2v2.4zM999.5,127.8l-1.7,-1.2v2.4z" fill="#333"/><circle cx="994" cy="127.8" r="0.8" fill="#333"/>
<polygon points="990.80,144.46 994.00,146.11 994.00,150.00 990.80,148.34" fill="#2b2b2b"/><polygon points="994.00,146.11 997.20,144.46 997.20,148.34 994.00,150.00" fill="#4d4d4d"/><polygon points="994.00,142.80 997.20,144.46 994.00,146.11 990.80,144.46" fill="#f2f2f2" stroke="#222" stroke-width="0.4" stroke-linejoin="round"/>
<path d="M989.6,143.2 A6,6 0 0 0 992.2,152 M998.4,149.6 A6,6 0 0 0 995.8,140.8" fill="none" stroke="#222" stroke-width="0.8"/><path d="M993.6,152.6l-2.3,0.5l1,-2.1z M994.4,140.2l2.3,-0.5l-1,2.1z" fill="#222"/>
<circle cx="993.2" cy="164" r="3.5" fill="#f6f6f6" stroke="#222" stroke-width="0.9"/><path d="M996,166.8l2.4,2.6" stroke="#111" stroke-width="2" stroke-linecap="round"/>
<path d="M988.5,176.3h11" stroke="#cfcfcf" stroke-width="0.8"/>
<polygon points="990.80,187.06 994.00,188.71 994.00,192.60 990.80,190.94" fill="#2b2b2b"/><polygon points="994.00,188.71 997.20,187.06 997.20,190.94 994.00,192.60" fill="#4d4d4d"/><polygon points="994.00,185.40 997.20,187.06 994.00,188.71 990.80,187.06" fill="#f2f2f2" stroke="#222" stroke-width="0.4" stroke-linejoin="round"/>
<path d="M988.8,186.2v-3h2.6M996.6,183.2h2.6v3M999.2,191.6v3h-2.6M991.4,194.6h-2.6v-3" fill="none" stroke="#222" stroke-width="0.85"/>
<circle cx="996.6" cy="204" r="3.3" fill="#f6f6f6" stroke="#222" stroke-width="0.7"/>
<polygon points="988.10,205.61 992.50,207.82 992.50,213.00 988.10,210.79" fill="#2b2b2b"/><polygon points="992.50,207.82 996.90,205.61 996.90,210.79 992.50,213.00" fill="#4d4d4d"/><polygon points="992.50,203.40 996.90,205.61 992.50,207.82 988.10,205.61" fill="#f2f2f2" stroke="#222" stroke-width="0.5" stroke-linejoin="round"/>
<path d="M988.4,225.4 Q994,219.6 999.6,225.4 Q994,231 988.4,225.4Z" fill="#f6f6f6" stroke="#222" stroke-width="0.8"/><circle cx="994" cy="225.3" r="2" fill="#666" stroke="#222" stroke-width="0.5"/>
<path d="M989,240.6h10l0.8,6.6h-10.6z" fill="#f6f6f6" stroke="#222" stroke-width="0.7"/><path d="M989.4,243.8h10M992.2,240.6l-0.3,6.6M995.4,240.6l0.3,6.6" stroke="#222" stroke-width="0.6"/>
<path d="M991.6,241.4 Q995.4,237.6 999.4,241.4 Q995.4,245 991.6,241.4Z" fill="#f6f6f6" stroke="#222" stroke-width="0.7"/><circle cx="995.5" cy="241.3" r="1.2" fill="#222"/>
<path d="M988.5,255.8h11" stroke="#cfcfcf" stroke-width="0.8"/>
<polygon points="988.70,267.69 992.40,269.49 992.40,273.70 988.70,271.91" fill="#2b2b2b"/><polygon points="992.40,269.49 996.10,267.69 996.10,271.91 992.40,273.70" fill="#4d4d4d"/><polygon points="992.40,265.90 996.10,267.69 992.40,269.49 988.70,267.69" fill="#f2f2f2" stroke="#222" stroke-width="0.4" stroke-linejoin="round"/>
<path d="M988.6,274.2 L996,265.6" stroke="#111" stroke-width="1.1"/><path d="M995.4,266.2l4.2,-4.8" stroke="#777" stroke-width="2.2"/><path d="M995,265l4,-4.4" stroke="#222" stroke-width="0.6"/>
<rect x="988.6" y="263.4" width="0.9" height="0.9" fill="#333"/>
<rect x="999.6" y="272.8" width="0.9" height="0.9" fill="#333"/></svg>
<svg class="abs ico" style="left:0;top:0" width="1024" height="560" viewBox="0 0 1024 560">
<defs>
<linearGradient id="ncL" x1="0" y1="0" x2="0" y2="1"><stop offset="0" stop-color="#f2f2f2"/><stop offset="1" stop-color="#c8c8c8"/></linearGradient>
<linearGradient id="ncR" x1="0" y1="0" x2="0" y2="1"><stop offset="0" stop-color="#f4f4f4"/><stop offset="1" stop-color="#d6d6d6"/></linearGradient>
<filter id="ncb" x="-30%" y="-30%" width="160%" height="160%"><feGaussianBlur stdDeviation="1.6"/></filter>
</defs>
<ellipse cx="987" cy="93" rx="17" ry="5" fill="#cfcfcf" filter="url(#ncb)" opacity="0.8"/>
<polygon points="968.4,65 987,70.6 987,95.6 969.6,88.8" fill="url(#ncL)"/>
<polygon points="1005,65 987,70.6 987,95.6 1004.6,88.8" fill="url(#ncR)"/>
<polygon points="968.4,65 986.6,60.6 1005,65 987,70.6" fill="#f6f6f6"/>
<path d="M968.4,65 L986.6,60.6 L1005,65 M968.4,65 L969.6,88.8 L987,95.6 L1004.6,88.8 L1005,65 M987,70.6 L987,95.6" fill="none" stroke="#c4c4c4" stroke-width="0.7" stroke-dasharray="2 1.4"/>
<path d="M968.4,65 L987,70.6 L1005,65" fill="none" stroke="#d0d0d0" stroke-width="0.6" stroke-dasharray="2 1.4"/>
<polygon points="983.4,69.6 987,68.2 990.8,69.6 990.8,73.6 987,74.8 983.4,73.6" fill="#a8dcef"/>
<text x="0" y="0" font-family="Liberation Sans, sans-serif" font-weight="bold" font-size="5.8" fill="#111" transform="matrix(0.62,0.27,0,1.42,972.4,80.6)">BACK</text>
<text x="0" y="0" font-family="Liberation Sans, sans-serif" font-weight="bold" font-size="5.8" fill="#111" transform="matrix(0.62,-0.24,0,1.42,992.4,85.2)">LEFT</text>
<text x="0" y="0" font-family="Liberation Sans, sans-serif" font-weight="bold" font-size="4.4" fill="#222" transform="matrix(0.95,0.3,-0.7,0.25,983.2,63.4)">TOP</text>
</svg>


</div>
</body></html>
